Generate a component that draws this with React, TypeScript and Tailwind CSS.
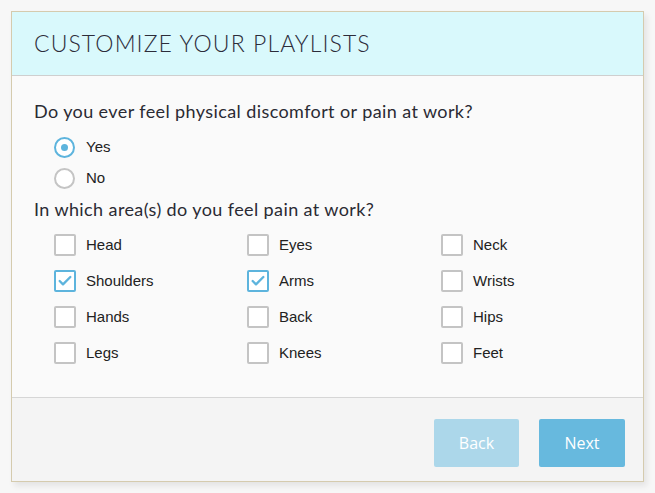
import { Check } from 'lucide-react'

const AREAS = [
  ['Head', false], ['Eyes', false], ['Neck', false],
  ['Shoulders', true], ['Arms', true], ['Wrists', false],
  ['Hands', false], ['Back', false], ['Hips', false],
  ['Legs', false], ['Knees', false], ['Feet', false],
] as const

function Radio({ label, checked }: { label: string; checked?: boolean }) {
  return (
    <label className="flex items-center h-[31px]">
      <span
        className={
          'w-[21px] h-[21px] rounded-full border-2 flex items-center justify-center bg-white ' +
          (checked ? 'border-[#5db4dd]' : 'border-[#c4c4c4]')
        }
      >
        {checked && <span className="w-[7px] h-[7px] rounded-full bg-[#5db4dd]" />}
      </span>
      <span className="ml-[11px] text-[15px] text-[#222]">{label}</span>
    </label>
  )
}

function Box({ label, checked }: { label: string; checked: boolean }) {
  return (
    <label className="flex items-center h-[36px]">
      <span
        className={
          'w-[22px] h-[22px] rounded-[2px] border-2 flex items-center justify-center bg-white ' +
          (checked ? 'border-[#5db4dd]' : 'border-[#c4c4c4]')
        }
      >
        {checked && <Check size={16} strokeWidth={3.5} className="text-[#5db4dd]" />}
      </span>
      <span className="ml-[10px] text-[15px] text-[#222]">{label}</span>
    </label>
  )
}

export default function App() {
  return (
    <div className="w-[655px] h-[493px] bg-[#f7f7f7] pt-[11px] pl-[11px]" style={{ fontFamily: 'Arial, "Liberation Sans", sans-serif' }}>
      <div className="w-[633px] h-[471px] border border-[#d5cbae] flex flex-col shadow-[3px_4px_6px_rgba(0,0,0,0.08)]">
        <div className="h-[64px] bg-[#d9f9fc] border-b border-[#cfcfcf] flex items-center px-[22px]">
          <h1 className="text-[23px] text-[#2c2c3a] tracking-[1.1px] font-light" style={{ fontFamily: 'Lato, sans-serif' }}>
            CUSTOMIZE YOUR PLAYLISTS
          </h1>
        </div>
        <div className="flex-1 bg-[#fafafa] px-[22px] pt-[23px]">
          <p className="text-[18px] text-[#2a2a33] leading-[24px] tracking-[0.4px]" style={{ fontFamily: 'Lato, sans-serif' }}>
            Do you ever feel physical discomfort or pain at work?
          </p>
          <div className="pl-[20px] mt-[9px]">
            <Radio label="Yes" checked />
            <Radio label="No" />
          </div>
          <p className="text-[18px] text-[#2a2a33] leading-[24px] mt-[3px] tracking-[0.4px]" style={{ fontFamily: 'Lato, sans-serif' }}>
            In which area(s) do you feel pain at work?
          </p>
          <div className="grid grid-cols-[193px_194px_1fr] pl-[20px] mt-[6px]">
            {AREAS.map(([label, checked]) => (
              <Box key={label} label={label} checked={checked} />
            ))}
          </div>
        </div>
        <div className="h-[84px] bg-[#f4f4f4] border-t border-[#d6d6d6] flex items-start pt-[21px] justify-end gap-[20px] pr-[18px]">
          <button className="w-[85px] h-[48px] rounded-[2px] bg-[#acd7ea] text-white text-[16px]" style={{ fontFamily: '"Open Sans", sans-serif' }}>
            Back
          </button>
          <button className="w-[86px] h-[48px] rounded-[2px] bg-[#67b9de] text-white text-[16px]" style={{ fontFamily: '"Open Sans", sans-serif' }}>
            Next
          </button>
        </div>
      </div>
    </div>
  )
}
